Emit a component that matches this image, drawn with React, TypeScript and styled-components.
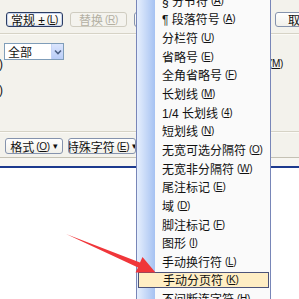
import React from 'react';
import styled, { createGlobalStyle, css } from 'styled-components';

const GlobalStyle = createGlobalStyle`
    html, body {
        margin: 0;
        padding: 0;
        background: #fff;
        overflow: hidden;
    }
    #root {
        width: 299px;
        height: 299px;
    }
`;

type MenuEntry = { label: string; key: string };

const entries: MenuEntry[] = [
    { label: '§ 分节符', key: 'A' },
    { label: '¶ 段落符号', key: 'A' },
    { label: '分栏符', key: 'U' },
    { label: '省略号', key: 'E' },
    { label: '全角省略号', key: 'F' },
    { label: '长划线', key: 'M' },
    { label: '1/4 长划线', key: '4' },
    { label: '短划线', key: 'N' },
    { label: '无宽可选分隔符', key: 'O' },
    { label: '无宽非分隔符', key: 'W' },
    { label: '尾注标记', key: 'E' },
    { label: '域', key: 'D' },
    { label: '脚注标记', key: 'F' },
    { label: '图形', key: 'I' },
    { label: '手动换行符', key: 'L' },
    { label: '手动分页符', key: 'K' },
    { label: '不间断连字符', key: 'H' },
];

const ACTIVE = '手动分页符';

const App: React.FC = () => {
    return (
        <>
            <GlobalStyle />
            <Screen>
                <Dialog>
                    <TopBar>
                        <XpButton $w={57} $focus>
                            常规 ± <Key>(<u>L</u>)</Key>
                        </XpButton>
                        <XpButton $w={57} disabled>
                            替换 <Key>(<u>R</u>)</Key>
                        </XpButton>
                        {/* these two sit under the open menu */}
                        <XpButton $w={64} aria-label="全部替换" />
                        <XpButton $w={63} aria-label="查找下一处" />
                        <XpButton $w={50}>取消</XpButton>
                    </TopBar>
                    <Rule />

                    <Options>
                        <Combo>
                            全部
                            <ComboArrow>
                                <svg width="8" height="6" viewBox="0 0 8 6">
                                    <path d="M1 1.5 L4 4.5 L7 1.5" fill="none" stroke="#4d6185" strokeWidth="1.6" />
                                </svg>
                            </ComboArrow>
                        </Combo>
                        <OptionRow>
                            <span>)</span>
                            <Key $right>(<u>M</u>)</Key>
                        </OptionRow>
                        <OptionRow>
                            <span>)</span>
                        </OptionRow>
                    </Options>
                    <Rule />

                    <BottomBar>
                        <XpButton $w={58}>
                            格式 <Key>(<u>O</u>)</Key> <Caret>▾</Caret>
                        </XpButton>
                        <XpButton $w={68}>
                            特殊字符 <Key>(<u>E</u>)</Key> <Caret>▾</Caret>
                        </XpButton>
                    </BottomBar>
                </Dialog>
                <FrameGap />
                <BlueRule />
                <Document />

                <Menu>
                    {entries.map((e) => (
                        <MenuItem key={e.label} $active={e.label === ACTIVE}>
                            {e.label}
                            <Key>
                                (<u>{e.key}</u>)
                            </Key>
                        </MenuItem>
                    ))}
                </Menu>

                <Arrow width="299" height="299" viewBox="0 0 299 299">
                    <polygon
                        points="66,234 140,262.5 142.5,257 155.5,272.5 135.5,272.5 138,267.5"
                        fill="#f0363a"
                    />
                </Arrow>
            </Screen>
        </>
    );
};
export default App;

const Screen = styled.div`
    position: relative;
    width: 299px;
    height: 299px;
    overflow: hidden;
    display: flex;
    flex-direction: column;
    background: #fff;
    font-family: 'Liberation Sans', 'Noto Sans CJK SC', sans-serif;
    font-size: 12px;
    color: #111;
`;

const Dialog = styled.div`
    height: 157px;
    flex-shrink: 0;
    display: flex;
    flex-direction: column;
    background: #f3f2ec;
    border-bottom: 1px solid #c4c1b4;
`;

const TopBar = styled.div`
    height: 33px;
    box-sizing: border-box;
    padding: 12px 0 0 6px;
    display: flex;
    gap: 7px;
    align-items: flex-start;
    white-space: nowrap;
`;

const Rule = styled.div`
    height: 1px;
    flex-shrink: 0;
    background: #d6d3c6;
    border-bottom: 1px solid #fbfaf6;
`;

const XpButton = styled.button<{ $w: number; $focus?: boolean }>`
    width: ${(p) => p.$w}px;
    height: 15px;
    flex-shrink: 0;
    box-sizing: border-box;
    padding: 0;
    display: inline-flex;
    align-items: center;
    justify-content: center;
    gap: 2px;
    border: 1px solid #8593ad;
    border-radius: 3px;
    background: linear-gradient(#ffffff, #f1f0ea);
    font-family: inherit;
    font-size: 12px;
    color: #111;
    white-space: nowrap;
    overflow: hidden;

    ${(p) =>
        p.$focus &&
        css`
            border-color: #2c3d63;
            box-shadow: inset 0 0 0 1px #c9d6ee;
        `}

    &:disabled {
        border-color: #cfccc0;
        color: #b3b0a3;
        background: #f4f3ee;
    }
`;

const Key = styled.span<{ $right?: boolean }>`
    font-size: 10px;
    letter-spacing: -0.3px;
    ${(p) =>
        p.$right &&
        css`
            margin-right: 16px;
        `}
`;

const Caret = styled.span`
    font-size: 9px;
    margin-left: 1px;
`;

const Options = styled.div`
    flex: 1;
    display: flex;
    flex-direction: column;
    padding-top: 8px;
`;

const Combo = styled.div`
    width: 60px;
    height: 17px;
    margin-left: 4px;
    box-sizing: border-box;
    border: 1px solid #7f9db9;
    background: #fff;
    display: flex;
    align-items: center;
    justify-content: space-between;
    padding-left: 3px;
    font-size: 12px;
`;

const ComboArrow = styled.div`
    width: 11px;
    height: 15px;
    display: flex;
    align-items: center;
    justify-content: center;
    background: linear-gradient(#dbe5fd, #b9cdf7);
    border-left: 1px solid #c7d5f5;
`;

const OptionRow = styled.div`
    height: 8px;
    line-height: 8px;
    display: flex;
    justify-content: space-between;
    align-items: center;
    margin-bottom: 18px;

    & > span:first-child {
        margin-left: -1px;
    }
`;

const BottomBar = styled.div`
    height: 24px;
    box-sizing: border-box;
    padding: 5px 0 0 5px;
    display: flex;
    gap: 5px;
    align-items: flex-start;

    & > button {
        height: 16px;
    }
`;

const FrameGap = styled.div`
    height: 8px;
    flex-shrink: 0;
    background: #f7f6f1;
`;

const BlueRule = styled.div`
    height: 2px;
    flex-shrink: 0;
    background: #1d3a8e;
`;

const Document = styled.div`
    flex: 1;
    background: #fff;
`;

const Menu = styled.div`
    position: absolute;
    left: 136px;
    top: -10px;
    width: 135px;
    box-sizing: border-box;
    border: 1px solid #7886b8;
    background: linear-gradient(to right, #e6effd 0, #a6c2f2 18px, #fafafa 18px);
    display: flex;
    flex-direction: column;
    white-space: nowrap;
`;

const MenuItem = styled.div<{ $active?: boolean }>`
    height: 18.65px;
    box-sizing: border-box;
    padding-left: 25px;
    display: flex;
    align-items: center;
    gap: 3px;
    font-size: 12px;
    color: #111;

    ${(p) =>
        p.$active &&
        css`
            height: 16.65px;
            margin: 1px;
            padding-left: 24px;
            background: #ffeec4;
            border: 1px solid #4d5479;
        `}
`;

const Arrow = styled.svg`
    position: absolute;
    left: 0;
    top: 0;
    pointer-events: none;
`;
